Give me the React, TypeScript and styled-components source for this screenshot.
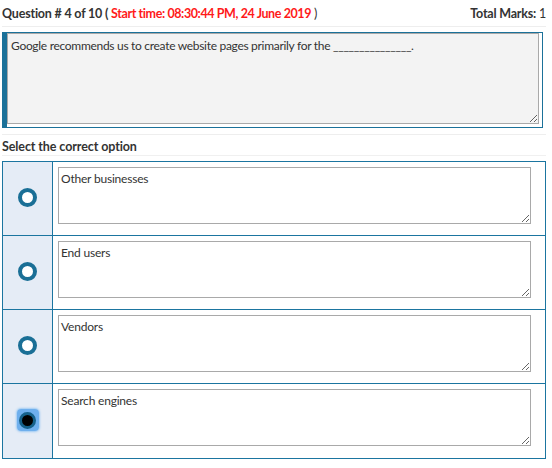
import React from 'react';
import styled, { createGlobalStyle } from 'styled-components';

const GlobalStyle = createGlobalStyle`
  body {
    margin: 0;
    background: #fff;
    font-family: Lato, "Liberation Sans", sans-serif;
    color: #333;
  }
`;

const Page = styled.div`
  width: 552px;
  padding: 0 6px 0 2px;
  box-sizing: border-box;
`;

const Header = styled.div`
  display: flex;
  justify-content: space-between;
  align-items: center;
  height: 26px;
  font-size: 12.5px;
  letter-spacing: -0.2px;
  border-bottom: 1px solid #eee;
`;

const Strong = styled.span`
  font-weight: 700;
`;

const Red = styled.span`
  color: #ff1a1a;
  font-weight: 700;
  letter-spacing: -0.4px;
`;

const QuestionBox = styled.div`
  margin-top: 5px;
  width: 541px;
  box-sizing: border-box;
  border: 1.5px solid #1b7199;
  border-left: 5px solid #1b7199;
  padding: 0 3px 3px 0;
  display: flex;
`;

const QuestionText = styled.textarea`
  flex: 1;
  height: 91px;
  box-sizing: border-box;
  background: #f3f3f3;
  border: 1.5px solid #a9a9a9;
  padding: 4px 3px;
  font-family: Lato, "Liberation Sans", sans-serif;
  font-size: 12px;
  letter-spacing: -0.3px;
  color: #333;
  outline: none;
`;

const Divider = styled.div`
  height: 6px;
  border-bottom: 1px solid #eee;
`;

const SectionTitle = styled.div`
  font-size: 12.5px;
  font-weight: 700;
  letter-spacing: -0.1px;
  height: 20px;
  line-height: 24px;
  border-bottom: 1px solid #f0f0f0;
`;

const Options = styled.div`
  margin-top: 5px;
  border: 1.5px solid #1b75a0;
  display: grid;
  grid-template-columns: 50px 1fr;
`;

const Row = styled.div<{ $last?: boolean }>`
  display: contents;
  & > * {
    border-bottom: ${p => (p.$last ? 'none' : '1.5px solid #1b75a0')};
  }
`;

const RadioCell = styled.div`
  background: #e5ecf6;
  border-right: 1.5px solid #1b75a0;
  display: flex;
  align-items: center;
  justify-content: center;
  height: 74px;
  box-sizing: border-box;
`;

const Radio = styled.span<{ $checked?: boolean }>`
  display: flex;
  align-items: center;
  justify-content: center;
  flex: none;
  width: 22px;
  height: 22px;
  border-radius: 4px;
  margin-top: -2px;
  background: ${p => (p.$checked ? 'rgba(80, 160, 235, 0.8)' : 'transparent')};
  box-shadow: ${p => (p.$checked ? '0 0 2px 1px rgba(100, 175, 240, 0.55)' : 'none')};

  &::after {
    content: '';
    flex: none;
    width: 11px;
    height: 11px;
    border-radius: 50%;
    border: ${p => (p.$checked ? '3px solid #15618a' : '4px solid #1a6f96')};
    background: ${p => (p.$checked ? '#000' : '#fff')};
  }
`;

const AnswerCell = styled.div`
  padding: 5px 14px 0 5px;
  height: 74px;
  box-sizing: border-box;
  display: flex;
  background: #fff;
`;

const AnswerText = styled.textarea`
  flex: 1;
  height: 57px;
  box-sizing: border-box;
  border: 1.5px solid #a9a9a9;
  padding: 3px 2px;
  font-family: Lato, "Liberation Sans", sans-serif;
  font-size: 12px;
  letter-spacing: -0.2px;
  color: #333;
  background: #fff;
  outline: none;
`;

const options = ['Other businesses', 'End users', 'Vendors', 'Search engines'];
const selected = 3;

const App: React.FC = () => {
  return (
    <Page>
      <GlobalStyle />
      <Header>
        <span>
          <Strong>Question # 4 of 10 ( </Strong>
          <Red>Start time: 08:30:44 PM, 24 June 2019</Red> )
        </span>
        <span>
          <Strong>Total Marks: </Strong>1
        </span>
      </Header>

      <QuestionBox>
        <QuestionText
          readOnly
          defaultValue="Google recommends us to create website pages primarily for the _______________."
        />
      </QuestionBox>
      <Divider />

      <SectionTitle>Select the correct option</SectionTitle>

      <Options>
        {options.map((opt, i) => (
          <Row key={opt} $last={i === options.length - 1}>
            <RadioCell>
              <Radio $checked={i === selected} />
            </RadioCell>
            <AnswerCell>
              <AnswerText readOnly defaultValue={opt} />
            </AnswerCell>
          </Row>
        ))}
      </Options>
    </Page>
  );
};

export default App;
